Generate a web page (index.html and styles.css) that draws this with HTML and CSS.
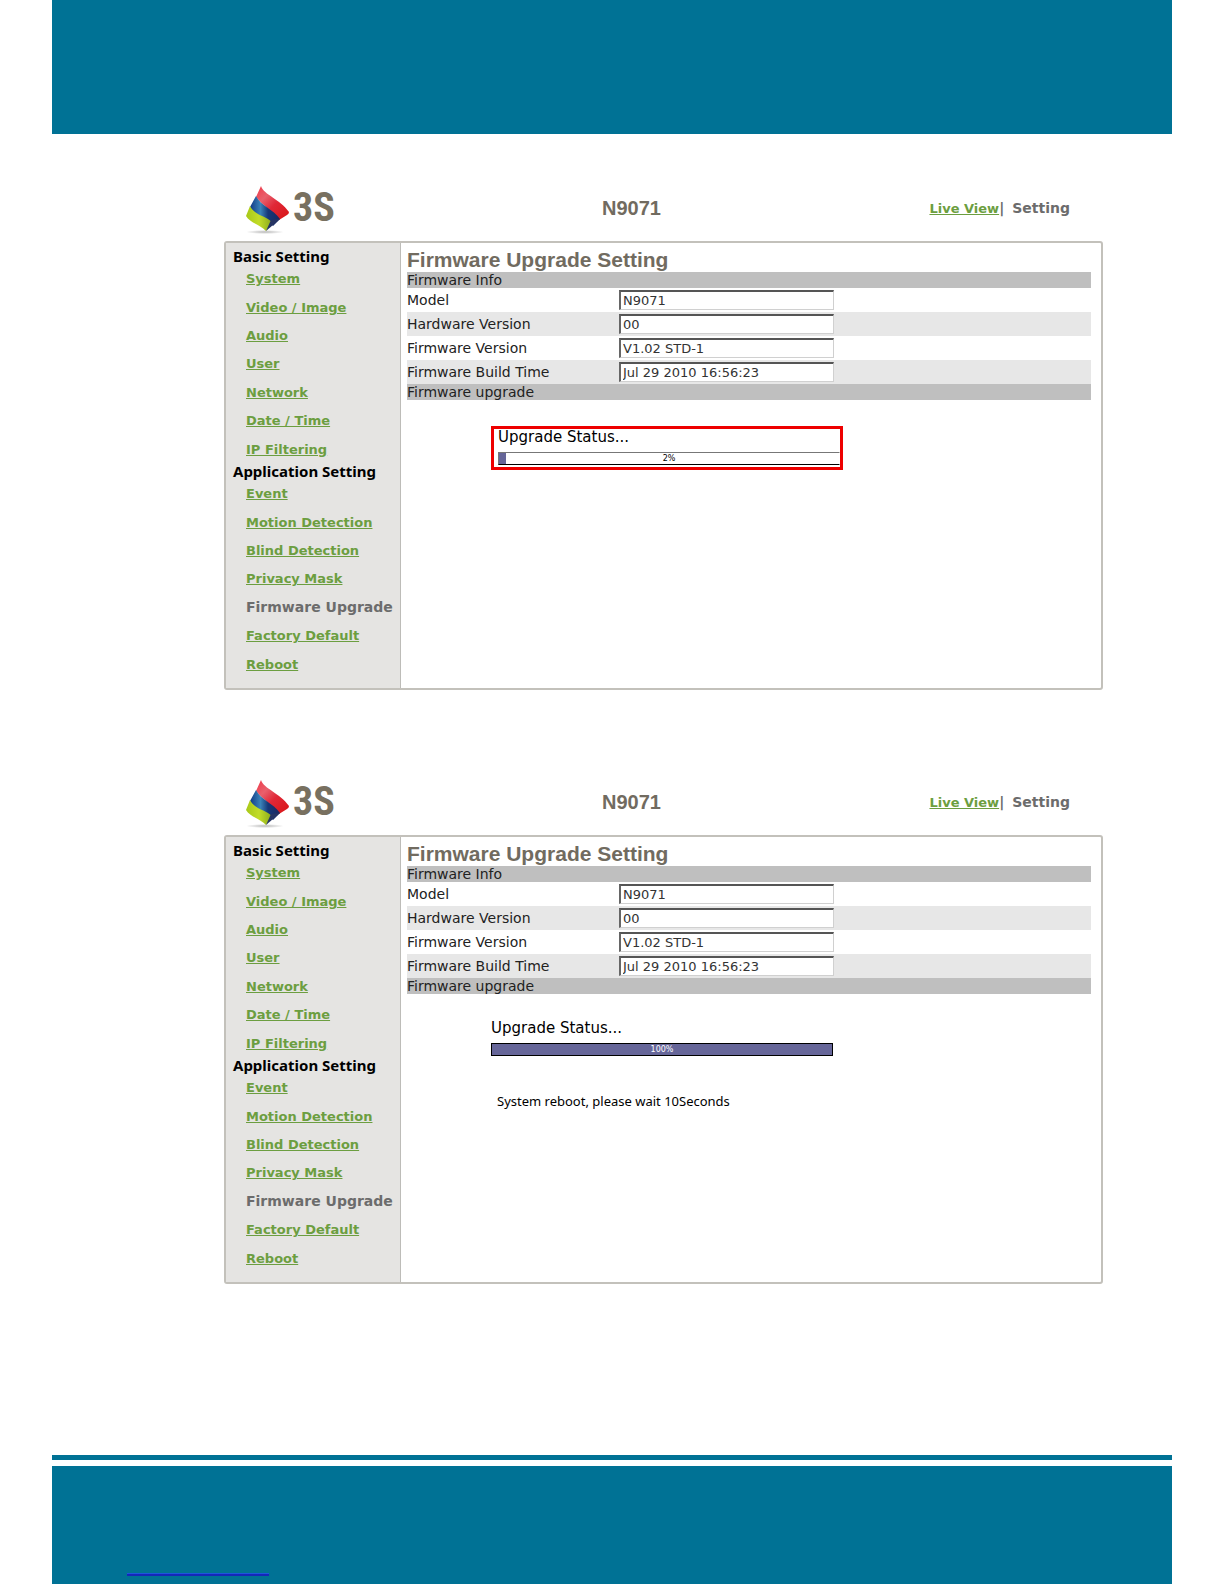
FILE: index.html
```
<!DOCTYPE html>
<html lang="en">
<head>
<meta charset="utf-8">
<meta name="viewport" content="width=device-width, initial-scale=1">
<title>N9071 Firmware Upgrade</title>
<link rel="stylesheet" href="styles.css">
</head>
<body>
<svg width="0" height="0" class="defs" aria-hidden="true">
  <defs>
    <linearGradient id="red" x1="0" y1="0" x2="1" y2="1"><stop offset="0" stop-color="#f03848"/><stop offset=".3" stop-color="#e8606c"/><stop offset=".55" stop-color="#e02838"/><stop offset="1" stop-color="#d81414"/></linearGradient>
    <linearGradient id="blue" x1="0" y1="0" x2="1" y2="0"><stop offset="0" stop-color="#123a86"/><stop offset=".35" stop-color="#3a83b8"/><stop offset=".6" stop-color="#163878"/><stop offset="1" stop-color="#1c2860"/></linearGradient>
    <linearGradient id="lime" x1="0" y1="0" x2="1" y2="0"><stop offset="0" stop-color="#a8c818"/><stop offset=".5" stop-color="#c2dc28"/><stop offset="1" stop-color="#8aa81c"/></linearGradient>
    <radialGradient id="shade"><stop offset="0" stop-color="#b8b8b8"/><stop offset="1" stop-color="#ffffff"/></radialGradient>
    <symbol id="mark" viewBox="0 0 44 52">
      <ellipse cx="19" cy="50" rx="19" ry="2" fill="url(#shade)"/>
      <path d="M15 4C18 13 34 17 43 30Q43 32 41 33L33 38C27 29 17 24 10 15Z" fill="url(#red)"/>
      <path d="M10 14C15 24 27 27 34 37L27 44C21 37 9 34 4 25Z" fill="url(#blue)"/>
      <path d="M4 24C8 33 20 34 26 40L20 49C15 43 4 41 0 34Z" fill="url(#lime)"/>
      <path d="M25 38L34 37L20 49Z" fill="#263463"/>
    </symbol>
  </defs>
</svg>
<div class="page">
  <div class="band"></div>
  <main class="screens">
    <section class="screen">
      <header class="top">
        <div class="logo"><svg class="mark"><use href="#mark"/></svg><span class="brand">3S</span></div>
        <h1 class="model">N9071</h1>
        <nav class="modes"><a class="link" href="#">Live View</a><span>|</span><span class="mode">Setting</span></nav>
      </header>
      <div class="frame">
        <nav class="side">
          <h2 class="group">Basic Setting</h2>
          <ul class="menu">
            <li><a class="link" href="#">System</a></li>
            <li><a class="link" href="#">Video / Image</a></li>
            <li><a class="link" href="#">Audio</a></li>
            <li><a class="link" href="#">User</a></li>
            <li><a class="link" href="#">Network</a></li>
            <li><a class="link" href="#">Date / Time</a></li>
            <li><a class="link" href="#">IP Filtering</a></li>
          </ul>
          <h2 class="group">Application Setting</h2>
          <ul class="menu">
            <li><a class="link" href="#">Event</a></li>
            <li><a class="link" href="#">Motion Detection</a></li>
            <li><a class="link" href="#">Blind Detection</a></li>
            <li><a class="link" href="#">Privacy Mask</a></li>
            <li class="current">Firmware Upgrade</li>
            <li><a class="link" href="#">Factory Default</a></li>
            <li><a class="link" href="#">Reboot</a></li>
          </ul>
        </nav>
        <div class="content">
          <h2 class="title">Firmware Upgrade Setting</h2>
          <h3 class="section">Firmware Info</h3>
          <div class="row"><label for="model-a">Model</label><input id="model-a" type="text" value="N9071" readonly></div>
          <div class="row"><label for="hw-a">Hardware Version</label><input id="hw-a" type="text" value="00" readonly></div>
          <div class="row"><label for="fw-a">Firmware Version</label><input id="fw-a" type="text" value="V1.02 STD-1" readonly></div>
          <div class="row"><label for="time-a">Firmware Build Time</label><input id="time-a" type="text" value="Jul 29 2010 16:56:23" readonly></div>
          <h3 class="section">Firmware upgrade</h3>
          <div class="status highlighted">
            <p class="status-label">Upgrade Status...</p>
            <div class="bar" role="progressbar" aria-label="Upgrade status" aria-valuenow="2"><div class="fill" style="width:2%"></div><span class="percent">2%</span></div>
          </div>
        </div>
      </div>
    </section>

    <section class="screen">
      <header class="top">
        <div class="logo"><svg class="mark"><use href="#mark"/></svg><span class="brand">3S</span></div>
        <h1 class="model">N9071</h1>
        <nav class="modes"><a class="link" href="#">Live View</a><span>|</span><span class="mode">Setting</span></nav>
      </header>
      <div class="frame">
        <nav class="side">
          <h2 class="group">Basic Setting</h2>
          <ul class="menu">
            <li><a class="link" href="#">System</a></li>
            <li><a class="link" href="#">Video / Image</a></li>
            <li><a class="link" href="#">Audio</a></li>
            <li><a class="link" href="#">User</a></li>
            <li><a class="link" href="#">Network</a></li>
            <li><a class="link" href="#">Date / Time</a></li>
            <li><a class="link" href="#">IP Filtering</a></li>
          </ul>
          <h2 class="group">Application Setting</h2>
          <ul class="menu">
            <li><a class="link" href="#">Event</a></li>
            <li><a class="link" href="#">Motion Detection</a></li>
            <li><a class="link" href="#">Blind Detection</a></li>
            <li><a class="link" href="#">Privacy Mask</a></li>
            <li class="current">Firmware Upgrade</li>
            <li><a class="link" href="#">Factory Default</a></li>
            <li><a class="link" href="#">Reboot</a></li>
          </ul>
        </nav>
        <div class="content">
          <h2 class="title">Firmware Upgrade Setting</h2>
          <h3 class="section">Firmware Info</h3>
          <div class="row"><label for="model-b">Model</label><input id="model-b" type="text" value="N9071" readonly></div>
          <div class="row"><label for="hw-b">Hardware Version</label><input id="hw-b" type="text" value="00" readonly></div>
          <div class="row"><label for="fw-b">Firmware Version</label><input id="fw-b" type="text" value="V1.02 STD-1" readonly></div>
          <div class="row"><label for="time-b">Firmware Build Time</label><input id="time-b" type="text" value="Jul 29 2010 16:56:23" readonly></div>
          <h3 class="section">Firmware upgrade</h3>
          <div class="status">
            <p class="status-label">Upgrade Status...</p>
            <div class="bar done" role="progressbar" aria-label="Upgrade status" aria-valuenow="100"><div class="fill" style="width:100%"></div><span class="percent">100%</span></div>
            <p class="note">System reboot, please wait 10Seconds</p>
          </div>
        </div>
      </div>
    </section>
  </main>
  <div class="rule"></div>
  <footer class="foot"><a class="foot-link" href="#" aria-label="Website"></a></footer>
</div>
</body>
</html>
```
FILE: styles.css
```
* { box-sizing: border-box; }
body {
  margin: 0;
  background: #fff;
  color: #222;
  font-family: "DejaVu Sans", Verdana, sans-serif;
  font-size: 14px;
}
h1, h2, h3, p, ul { margin: 0; padding: 0; }
ul { list-style: none; }
.defs { position: absolute; }

.page { margin: 0 52px; }
.band { height: 134px; background: #007295; }
.screens {
  display: flex;
  flex-direction: column;
  gap: 76px;
  padding: 38px 69px 171px 172px;
}

.top {
  display: flex;
  align-items: center;
  height: 69px;
  padding: 3px 33px 0 22px;
}
.logo { display: flex; align-items: center; gap: 3px; width: 356px; }
.mark { width: 44px; height: 52px; }
.brand {
  color: #787060;
  font: bold 40px/52px "Roboto Condensed", "Open Sans Condensed", "Liberation Sans Narrow", "Liberation Sans", Arial, sans-serif;
}
.model {
  color: #716b60;
  font: bold 20px/24px "Liberation Sans", Arial, sans-serif;
}
.modes {
  display: flex;
  align-items: baseline;
  margin-left: auto;
  color: #6c6c6c;
  font-weight: bold;
}
.mode { margin-left: 8px; }
.link { color: #6c9e40; font-size: 13px; font-weight: bold; }

.frame {
  display: flex;
  min-height: 449px;
  border: 2px solid #c3c1bb;
  border-radius: 3px;
}
.side {
  flex: none;
  width: 175px;
  padding: 5px 0 0 7px;
  background: #e5e4e2;
  border-right: 1px solid #bdbcb8;
  white-space: nowrap;
}
.group {
  color: #000;
  font: bold 15px/16px "Noto Sans", Tahoma, sans-serif;
}
.menu {
  display: grid;
  grid-auto-rows: 1fr;
  align-items: center;
  min-height: 199px;
  padding-left: 13px;
}
.current { color: #6c6c6c; font-weight: bold; }

.content { flex: 1; min-width: 0; padding: 4px 10px 0 6px; }
.title {
  color: #716b60;
  font: bold 21px/25px "Liberation Sans", Arial, sans-serif;
}
.section {
  height: 16px;
  background: #bfbfbf;
  font-size: 14px;
  font-weight: normal;
  line-height: 16px;
}
.row { display: flex; align-items: center; height: 24px; line-height: 20px; }
.row:nth-of-type(even) { background: #e7e7e7; }
.row label { width: 212px; }
.row input {
  width: 215px;
  height: 20px;
  padding: 0 2px;
  border: 1px solid #d0d0d0;
  border-top: 2px solid #555;
  border-left: 2px solid #666;
  background: #fff;
  color: #333;
  font: 13px/16px "DejaVu Sans", Verdana, sans-serif;
}

.status { width: 342px; margin: 26px 0 0 84px; color: #000; }
.highlighted {
  width: 352px;
  padding: 0 0 2px 4px;
  border: 3px solid #ee0000;
}
.status-label { font-size: 15px; line-height: 16px; }
.bar {
  position: relative;
  height: 13px;
  margin-top: 7px;
  border: 1px solid #000;
}
.highlighted .bar { border-color: #777 transparent #000 #777; }
.fill { height: 100%; background: #666699; }
.percent {
  position: absolute;
  inset: 0;
  font-size: 8px;
  line-height: 11px;
  text-align: center;
}
.done .percent { color: #fff; }
.note {
  margin-top: 35px;
  padding-left: 6px;
  font: 13px/20px "Noto Sans", Tahoma, sans-serif;
}

.rule { height: 5px; margin-bottom: 6px; background: #007295; }
.foot { height: 118px; padding: 107px 0 0 75px; background: #007295; }
.foot-link {
  display: block;
  width: 142px;
  height: 3px;
  border-top: 1px solid #1d55dc;
  border-bottom: 2px solid #1528b8;
}
```
